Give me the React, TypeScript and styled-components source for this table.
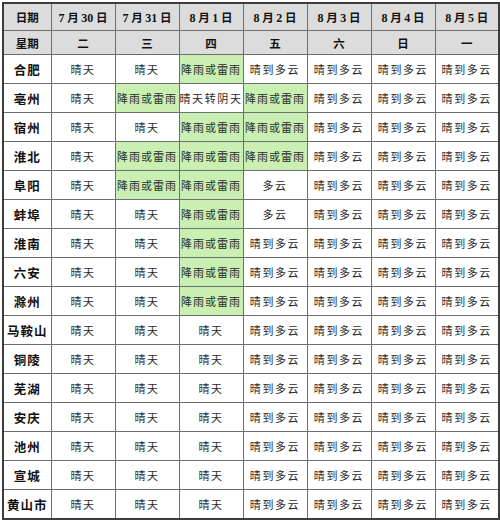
import styled, { createGlobalStyle } from "styled-components"

const GlobalStyle = createGlobalStyle`
	html, body {
		margin: 0;
		padding: 0;
		background: #ffffff;
	}
	body {
		font-family: "Noto Sans CJK SC", "Liberation Serif", serif;
	}
`

const Page = styled.div`
	width: 500px;
	height: 526px;
	padding: 2px 0 0 2px;
	box-sizing: border-box;
	background: #ffffff;
`

const Table = styled.table`
	border-collapse: collapse;
	table-layout: fixed;
	width: 495px;
	border: 2px solid #3c3c3c;
`

const Cell = styled.td<{ $green?: boolean }>`
	border: 1px solid #6e6e6e;
	padding: 0;
	height: 28px;
	text-align: center;
	vertical-align: middle;
	font-size: 11px;
	letter-spacing: ${(p) => (p.$green ? "1px" : "1.6px")};
	color: #2a2a2a;
	white-space: nowrap;
	overflow: hidden;
	background: ${(p) => (p.$green ? "#c9f0b2" : "#ffffff")};
`

const CityCell = styled.th`
	border: 1px solid #6e6e6e;
	padding: 0;
	height: 28px;
	text-align: center;
	font-size: 12.5px;
	font-weight: 700;
	letter-spacing: 1px;
	color: #111;
	white-space: nowrap;
	background: #ffffff;
`

const HeadCell = styled.th<{ $tall?: boolean }>`
	border: 1px solid #6e6e6e;
	padding: 0;
	height: ${(p) => (p.$tall ? "26px" : "23px")};
	text-align: center;
	font-size: 11.5px;
	font-weight: 700;
	color: #111;
	white-space: nowrap;
	background: #dcdcdc;
`

const Num = styled.span`
	font-family: "Liberation Serif", serif;
	font-weight: 700;
	font-size: 12px;
`

const dates: [string, string][] = [
	["7", "30"],
	["7", "31"],
	["8", "1"],
	["8", "2"],
	["8", "3"],
	["8", "4"],
	["8", "5"],
]

const weekdays = ["二", "三", "四", "五", "六", "日", "一"]

const R = "降雨或雷雨"
const Q = "晴天"
const D = "晴到多云"

const rows: [string, string[]][] = [
	["合肥", [Q, Q, R, D, D, D, D]],
	["亳州", [Q, R, "晴天转阴天", R, D, D, D]],
	["宿州", [Q, Q, R, R, D, D, D]],
	["淮北", [Q, R, R, R, D, D, D]],
	["阜阳", [Q, R, R, "多云", D, D, D]],
	["蚌埠", [Q, Q, R, "多云", D, D, D]],
	["淮南", [Q, Q, R, D, D, D, D]],
	["六安", [Q, Q, R, D, D, D, D]],
	["滁州", [Q, Q, R, D, D, D, D]],
	["马鞍山", [Q, Q, Q, D, D, D, D]],
	["铜陵", [Q, Q, Q, D, D, D, D]],
	["芜湖", [Q, Q, Q, D, D, D, D]],
	["安庆", [Q, Q, Q, D, D, D, D]],
	["池州", [Q, Q, Q, D, D, D, D]],
	["宣城", [Q, Q, Q, D, D, D, D]],
	["黄山市", [Q, Q, Q, D, D, D, D]],
]

const App = () => {
	return (
		<Page>
			<GlobalStyle />
			<Table>
				<colgroup>
					<col style={{ width: 48 }} />
					{dates.map((_, i) => (
						<col key={i} style={{ width: 64 }} />
					))}
				</colgroup>
				<thead>
					<tr>
						<HeadCell $tall>日期</HeadCell>
						{dates.map(([m, d]) => (
							<HeadCell $tall key={m + d}>
								<Num>{m}</Num> 月 <Num>{d}</Num> 日
							</HeadCell>
						))}
					</tr>
					<tr>
						<HeadCell>星期</HeadCell>
						{weekdays.map((w) => (
							<HeadCell key={w}>{w}</HeadCell>
						))}
					</tr>
				</thead>
				<tbody>
					{rows.map(([city, cells]) => (
						<tr key={city}>
							<CityCell>{city}</CityCell>
							{cells.map((c, i) => (
								<Cell key={i} $green={c === R}>
									{c}
								</Cell>
							))}
						</tr>
					))}
				</tbody>
			</Table>
		</Page>
	)
}

export default App
